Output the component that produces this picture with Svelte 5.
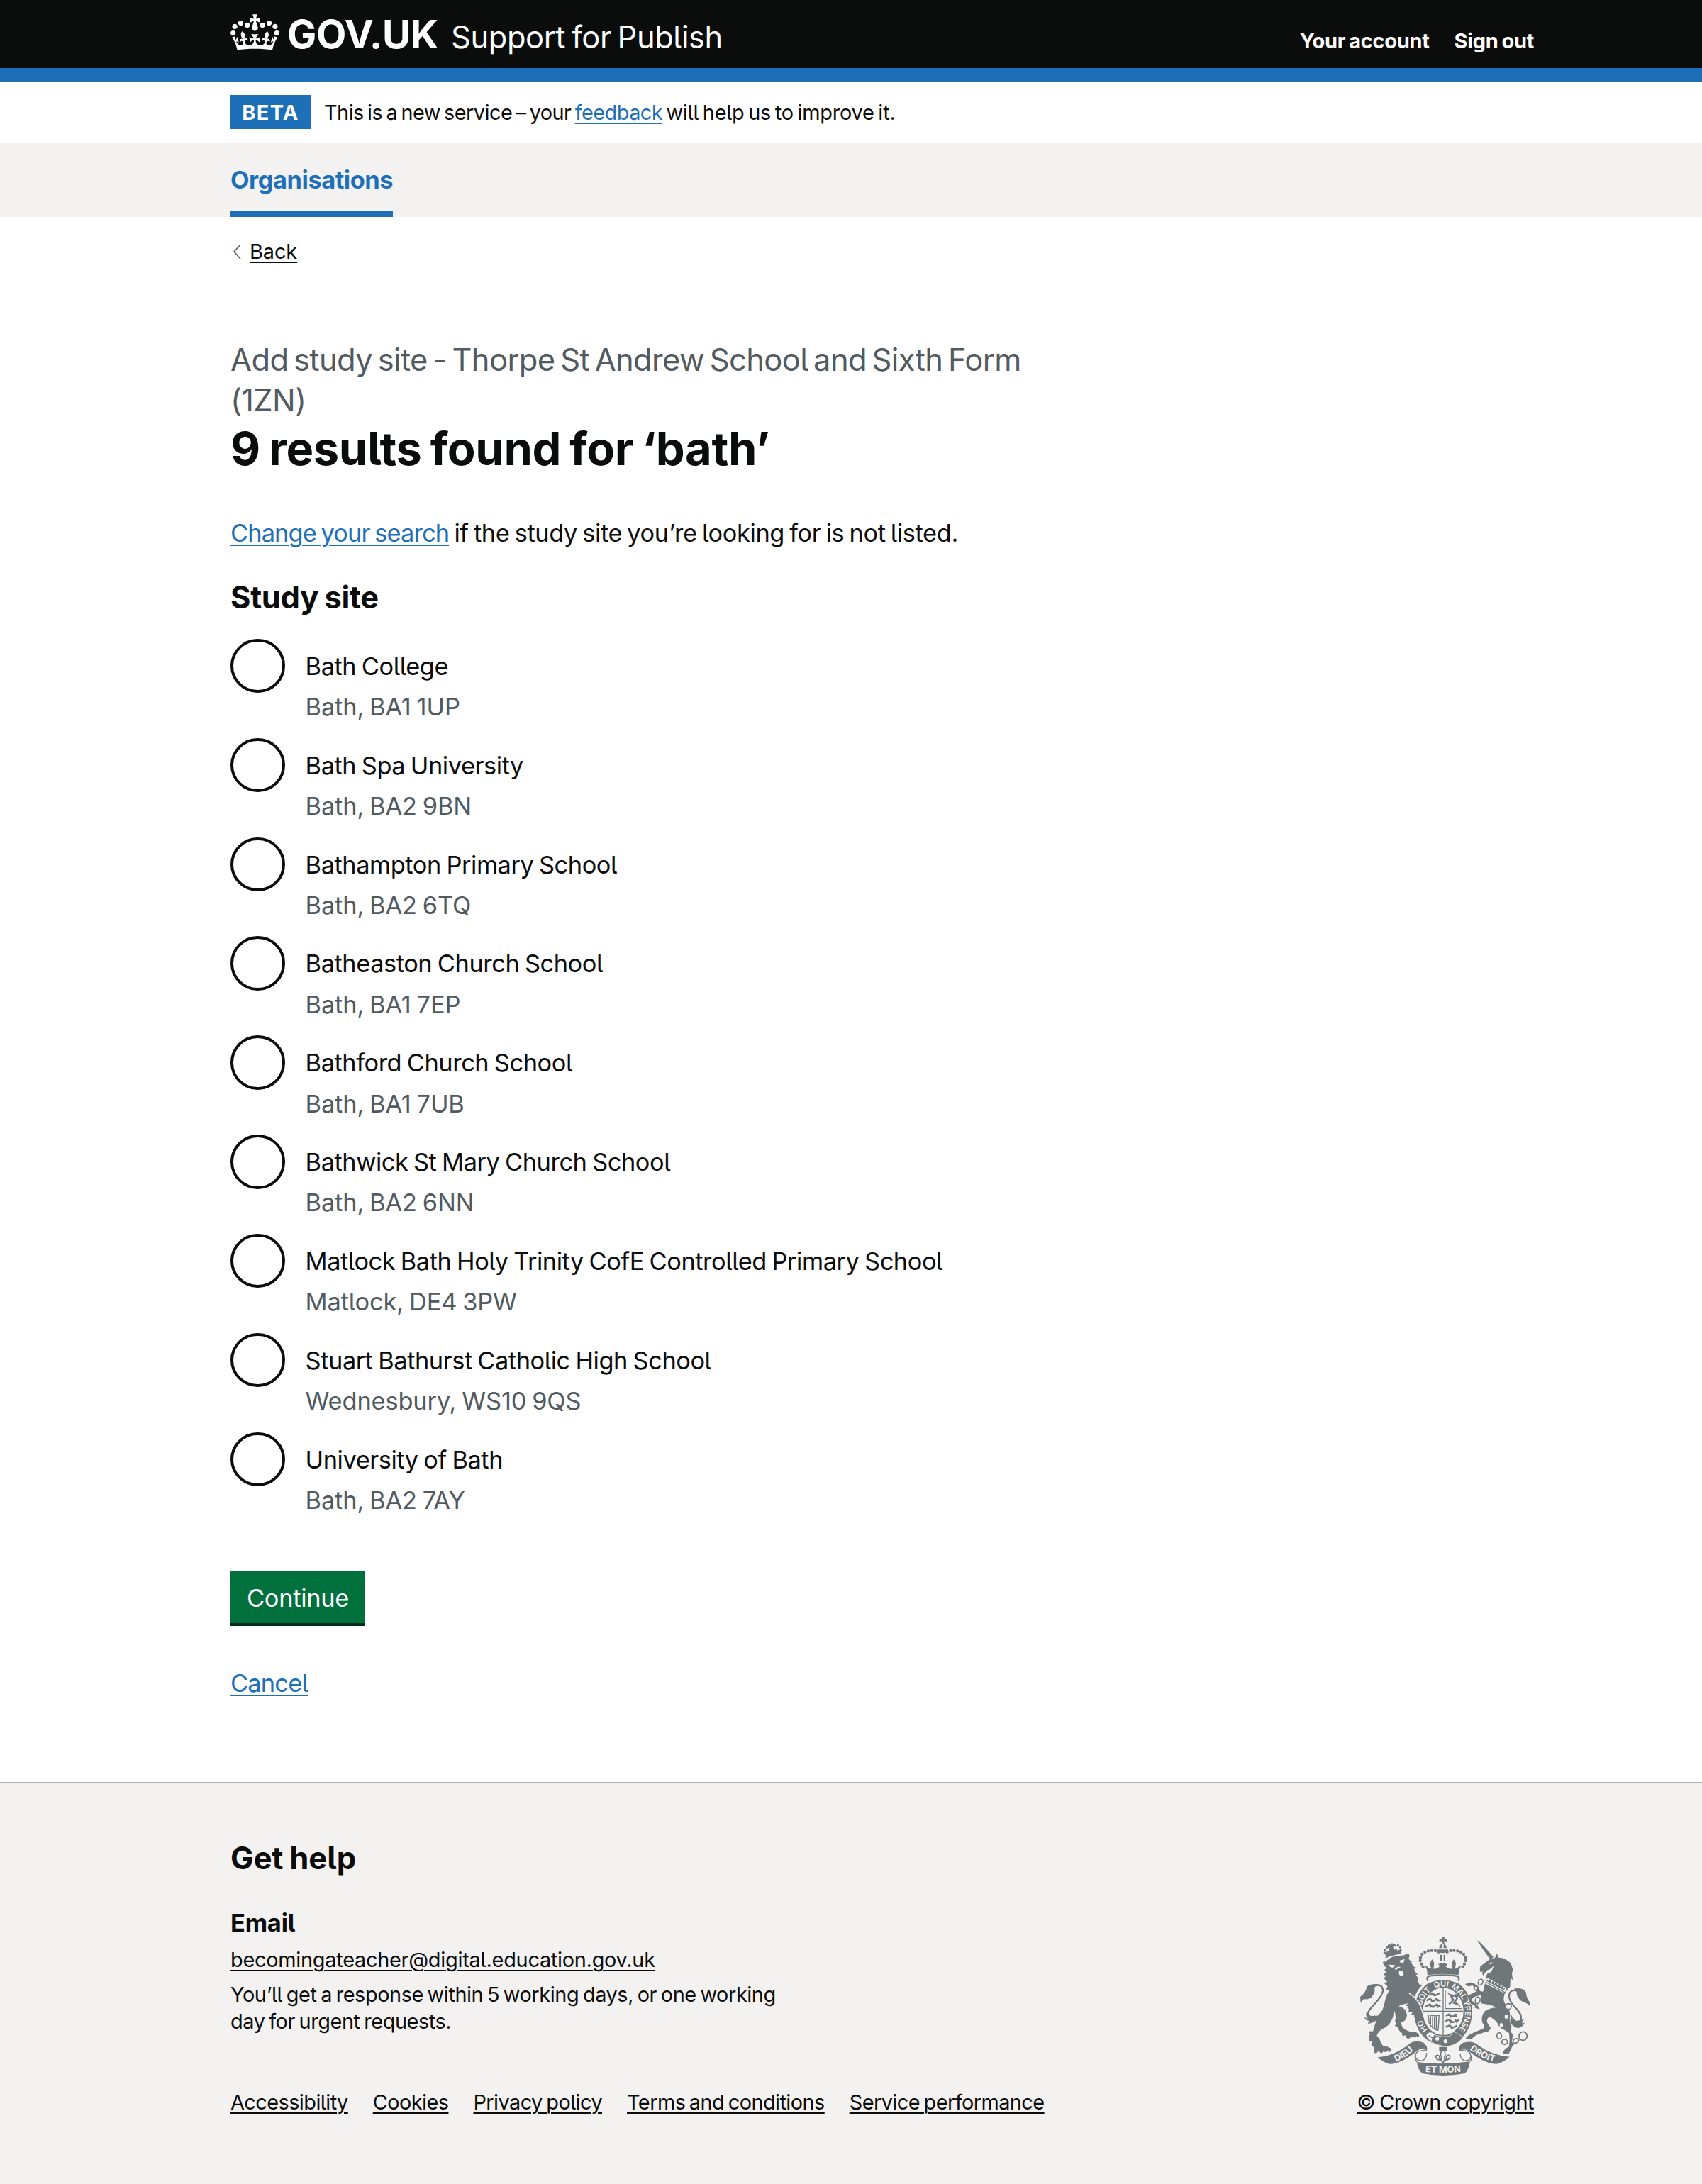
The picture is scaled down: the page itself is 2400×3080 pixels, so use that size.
<script>
  const sites = [
    ['Bath College', 'Bath, BA1 1UP'],
    ['Bath Spa University', 'Bath, BA2 9BN'],
    ['Bathampton Primary School', 'Bath, BA2 6TQ'],
    ['Batheaston Church School', 'Bath, BA1 7EP'],
    ['Bathford Church School', 'Bath, BA1 7UB'],
    ['Bathwick St Mary Church School', 'Bath, BA2 6NN'],
    ['Matlock Bath Holy Trinity CofE Controlled Primary School', 'Matlock, DE4 3PW'],
    ['Stuart Bathurst Catholic High School', 'Wednesbury, WS10 9QS'],
    ['University of Bath', 'Bath, BA2 7AY']
  ];

  const footerLinks = [
    'Accessibility',
    'Cookies',
    'Privacy policy',
    'Terms and conditions',
    'Service performance'
  ];

  // Pearls on the arches of the royal crown, left half; the right half mirrors them.
  const pearls = [
    [386, 128], [372, 123], [357, 122], [342, 124], [328, 129],
    [316, 138], [309, 151], [308, 165], [313, 179], [320, 191]
  ];

  // Links of the unicorn's chain: x, y, rx, ry, rotation.
  const chain = [
    [563, 256, 9, 13, 25],
    [544, 281, 8, 9, 20],
    [551, 333, 10, 14, 15],
    [681, 359, 12, 12, 0],
    [642, 483, 10, 13, -10],
    [665, 509, 12, 11, 0],
    [713, 504, 13, 9, -25],
    [743, 484, 17, 18, 0]
  ];

  // Words on the garter and how far round it each is centred, in percent.
  const garter = [['HO', 9], ['SOIT', 31.5], ['QUI', 47], ['MAL', 61], ['Y', 71], ['PENSE', 82.5]];
</script>

<header class="header">
  <div class="container masthead">
    <svg class="crown" viewBox="0 0 132 97" aria-hidden="true">
      <path
        fill="currentColor"
        fill-rule="evenodd"
        d="M25 30.2c3.5 1.5 7.7-.2 9.1-3.7 1.5-3.6-.2-7.8-3.9-9.2-3.6-1.4-7.6.3-9.1 3.9-1.4 3.5.3 7.5 3.9 9zM9 39.5c3.6 1.5 7.8-.2 9.2-3.7 1.5-3.6-.2-7.8-3.9-9.1-3.6-1.5-7.6.2-9.1 3.8-1.4 3.5.3 7.5 3.8 9zM4.4 57.2c3.5 1.5 7.7-.2 9.1-3.8 1.5-3.6-.2-7.7-3.9-9.1-3.5-1.5-7.6.3-9.1 3.8-1.4 3.5.3 7.6 3.9 9.1zm38.3-21.4c3.5 1.5 7.7-.2 9.1-3.8 1.5-3.6-.2-7.7-3.9-9.1-3.6-1.5-7.6.3-9.1 3.8-1.3 3.6.4 7.7 3.9 9.1zm64.4-5.6c-3.6 1.5-7.8-.2-9.1-3.7-1.5-3.6.2-7.8 3.8-9.2 3.6-1.4 7.7.3 9.2 3.9 1.3 3.5-.4 7.5-3.9 9zm15.9 9.3c-3.6 1.5-7.7-.2-9.1-3.7-1.5-3.6.2-7.8 3.7-9.1 3.6-1.5 7.7.2 9.2 3.8 1.5 3.5-.3 7.5-3.8 9zm4.7 17.7c-3.6 1.5-7.8-.2-9.2-3.8-1.5-3.6.2-7.7 3.9-9.1 3.6-1.5 7.7.3 9.2 3.8 1.3 3.5-.4 7.6-3.9 9.1zM89.3 35.8c-3.6 1.5-7.8-.2-9.2-3.8-1.4-3.6.2-7.7 3.9-9.1 3.6-1.5 7.7.3 9.2 3.8 1.4 3.6-.3 7.7-3.9 9.1zM69.7 17.7l8.9 4.7V9.3l-8.9 2.8c-.2-.3-.5-.6-.9-.9L72.4 0H59.6l3.5 11.2c-.3.3-.6.5-.9.9l-8.8-2.8v13.1l8.8-4.7c.3.3.6.7.9.9l-5 15.4v.1c-.2.8-.4 1.6-.4 2.4 0 4.1 3.1 7.5 7 8.1h.2c.3 0 .7.1 1 .1.4 0 .7 0 1-.1h.2c4-.6 7.1-4.1 7.1-8.1 0-.8-.1-1.7-.4-2.4V34l-5.1-15.4c.4-.2.7-.6 1-.9zM66 92.8c16.9 0 32.8 1.1 47.1 3.2 4-16.9 8.9-26.7 14-33.5l-9.6-3.4c1 4.9 1.1 7.2 0 10.2-1.5-1.4-3-4.3-4.2-8.7L108.6 76c2.8-2 5-3.2 7.5-3.3-4.4 9.4-10 11.9-13.6 11.2-4.3-.8-6.3-4.6-5.6-7.9 1-4.7 5.7-5.9 8-.5 4.3-8.7-3-11.4-7.6-8.8 7.1-7.2 7.9-13.5 2.1-21.1-8 6.1-8.1 12.3-4.5 20.8-4.7-5.4-12.1-2.5-9.5 6.2 3.4-5.2 7.9-2 7.2 3.1-.6 4.3-6.4 7.8-13.5 7.2-10.3-.9-10.9-8-11.2-13.8 2.5-.5 7.1 1.8 11 7.3L80.2 60c-4.1 4.4-8 5.3-12.3 5.4 1.4-4.4 8-11.6 8-11.6H55.5s6.4 7.2 7.9 11.6c-4.2-.1-8-1-12.3-5.4l1.4 16.4c3.9-5.5 8.5-7.7 10.9-7.3-.3 5.8-.9 12.8-11.1 13.8-7.2.6-12.9-2.9-13.5-7.2-.7-5 3.8-8.3 7.1-3.1 2.7-8.7-4.6-11.6-9.4-6.2 3.7-8.5 3.6-14.7-4.6-20.8-5.8 7.6-5 13.9 2.2 21.1-4.7-2.6-11.9.1-7.7 8.8 2.3-5.5 7.1-4.2 8.1.5.7 3.3-1.3 7.1-5.7 7.9-3.5.7-9-1.8-13.5-11.2 2.5.1 4.7 1.3 7.5 3.3l-4.7-15.4c-1.2 4.4-2.7 7.2-4.3 8.7-1.1-3-.9-5.3 0-10.2l-9.5 3.4c5 6.9 9.9 16.7 14 33.5 14.8-2.1 30.8-3.2 47.7-3.2z"
      />
    </svg>
    <span class="logotype">GOV.UK</span>
    <span class="service">Support for Publish</span>
    <nav class="account">
      <a href="#account">Your account</a>
      <a href="#signout">Sign out</a>
    </nav>
  </div>
</header>

<div class="container phase">
  <strong class="tag">BETA</strong>
  <span class="phase-text">This is a new service – your <a href="#feedback">feedback</a> <span class="phase-end">will help us to improve it.</span></span>
</div>

<nav class="primary">
  <div class="container"><a class="tab" href="#organisations">Organisations</a></div>
</nav>

<div class="container">
  <div class="back">
    <svg viewBox="0 0 12 22" aria-hidden="true"><path d="M11 1 2 11l9 10" /></svg>
    <a href="#back">Back</a>
  </div>

  <main>
    <span class="caption">Add study site - Thorpe St Andrew School and Sixth Form (1ZN)</span>
    <h1>9 results found for ‘bath’</h1>
    <p class="body"><a href="#search">Change your search</a> if the study site you’re looking for is not listed.</p>
    <h2 class="legend">Study site</h2>
    <div class="radios">
      {#each sites as [name, address]}
        <label class="radio">
          <span class="ring"></span>
          <span class="text">
            <span class="name">{name}</span>
            <span class="hint">{address}</span>
          </span>
        </label>
      {/each}
    </div>
    <button class="button" type="button">Continue</button>
    <p class="cancel"><a href="#cancel">Cancel</a></p>
  </main>
</div>

<footer class="footer">
  <div class="container footer-row">
    <div class="help">
      <h2>Get help</h2>
      <h3>Email</h3>
      <a class="email" href="#email">becomingateacher@digital.education.gov.uk</a>
      <p>You’ll get a response within 5 working days, or one working day for urgent requests.</p>
      <ul>
        {#each footerLinks as link}
          <li><a href="#footer">{link}</a></li>
        {/each}
      </ul>
    </div>
    <div class="copyright">
      <svg class="arms" viewBox="54 60 720 594" aria-hidden="true">
        <defs>
          <path id="garter" d="M358 474A93 107 0 1 1 436 482" />
          <path id="scroll-left" d="M194 597Q246 580 288 536" />
          <path id="scroll-mid" d="M310 634Q405 645 500 632" />
          <path id="scroll-right" d="M508 532Q556 580 634 596" />
        </defs>

        <!-- Lion -->
        <g class="ink">
          <path d="M160 155 166 132 228 122 228 138Q195 138 160 155Z" />
          <path d="M150 172Q154 167 163 170Q178 150 200 147L240 142Q250 134 260 138Q266 146 258 156L266 166 276 168 268 172 280 190 292 196 282 200 288 214 298 222 290 226 300 240 296 252 308 270 318 268Q292 292 286 318Q308 345 312 372L318 392 306 388 308 402 296 396 288 408 282 396 270 396 276 384Q262 384 256 378L270 374 252 364 262 358 246 356 256 346Q236 348 216 358Q250 366 252 396Q250 420 228 426Q226 440 238 452Q250 462 272 466Q290 464 302 476Q306 486 298 492L292 484Q284 494 270 486Q262 500 250 492L244 480Q228 490 232 472Q216 462 214 446L200 440 208 432Q198 424 204 410Q206 392 196 372L194 400Q184 434 160 448Q130 462 124 482L136 496Q140 516 154 528Q176 526 186 540Q188 548 178 552L172 544Q164 558 152 548Q146 562 136 552L130 546Q124 562 114 554L112 532 100 520 106 508 92 504Q86 490 96 474L88 466Q98 462 108 464Q116 436 122 420Q124 396 142 384Q152 370 158 340Q164 310 178 290L162 286 170 274 156 262 168 254 154 240 164 228 152 226 164 212 156 204 166 196Q152 186 150 172Z" />
          <circle cx="157" cy="132" r="5" /><circle cx="159" cy="119" r="5" /><circle cx="167" cy="109" r="5" />
          <circle cx="202" cy="101" r="5" /><circle cx="214" cy="100" r="5" /><circle cx="223" cy="108" r="5" /><circle cx="225" cy="121" r="5" />
          <path d="m174 94 9 4 2-6 6-1 1 6 8-3 1 9-8 0 3 18 10-8 6 10 8-5-2 10-56 15-7-12 9 2 4-11 10 4-3-16-9 3Z" />
        </g>
        <path class="line" d="M110 272Q148 260 150 290Q150 310 112 352Q80 384 86 400Q92 412 118 400" />
        <path class="ink" d="M130 264Q92 262 82 276Q78 300 54 318L56 344 68 328Q98 330 106 314Q120 296 114 280ZM82 380Q74 400 88 410L70 404Q78 418 92 420L86 432Q104 430 120 420L140 396Q110 400 98 398Z" />
        <path class="paper" d="m176 182 26 2-10 10Q180 196 176 182ZM218 166l24-8-4 14q-10 8-14 0ZM218 210q10-8 18 2l2 12q-12 14-20-2ZM200 200q14-14 26-8l-12 5-8 8Z" />

        <!-- Garter and shield -->
        <ellipse class="rim" cx="405" cy="382" rx="123" ry="142" />
        <ellipse class="paper" cx="405" cy="380" rx="86" ry="100" />
        <g class="thin">
          <path d="M405 280V480M320 379H490M414 290V368H484M424 300 476 360" />
          <path d="M342 394 346 430Q360 456 384 460M342 394Q372 402 388 396L384 460M352 400v34M360 402v44M368 402v50M376 400v56" />
        </g>
        <g class="beast">
          <path d="M346 312 360 304 372 312 392 302M334 334 350 326 362 338 376 328 394 336M330 360 348 350 362 362 378 350 394 362M358 300l10 14M350 324l8 14M374 322l8 16M346 348l8 16M376 348l8 16" />
          <path d="M416 398 430 392 444 402 466 392M414 422 430 414 446 426 474 416M416 446 430 440 444 450 464 440M430 390l8 16M454 390l8 14M430 414l8 16M456 414l8 14M434 438l8 14" />
          <path d="M430 350 446 334 440 318 456 310 464 326 450 344 466 350M436 308l12 10M462 306l6 12" />
        </g>
        {#each garter as [word, offset]}
          <text class="motto ring-text"><textPath href="#garter" startOffset="{offset}%" text-anchor="middle">{word}</textPath></text>
        {/each}
        <path class="strap" d="M352 474Q400 494 436 484L450 466 488 488Q468 522 415 526Q370 522 340 498Z" />
        <path class="buckle" d="M370 474Q344 458 332 478Q334 500 354 506M344 482l24 16" />
        <circle class="paper" cx="380" cy="496" r="8" />
        <circle class="paper" cx="415" cy="506" r="8" />

        <!-- Foreleg over the garter -->
        <path class="ink" d="M258 300Q300 326 312 372L320 396 306 390 308 404 296 398 286 410 282 396 268 396 276 384 260 380Z" />
        <path class="gap" d="M260 302Q302 328 314 372L322 398" />

        <!-- Unicorn -->
        <path class="ink" d="M548 78Q560 82 618 150L604 160Q572 118 548 78Z" />
        <path class="ink" d="M560 204 562 190Q580 176 598 162Q614 152 624 154L632 134 640 152Q678 152 694 184L700 204Q692 222 702 250L690 238 688 276 672 292 588 254 584 236 592 220Q610 216 614 200L622 184Q602 206 590 206L574 228 568 216 576 212 562 212Z" />
        <path class="outlined" d="M582 262 666 304Q656 330 666 346Q690 374 688 398Q682 420 694 440L692 468 700 476 696 510 706 518Q694 530 690 544L682 560 658 558Q656 544 684 528L686 500 684 472 664 458Q640 448 634 428Q620 410 600 402Q584 416 594 432L606 450Q600 468 580 468L544 480 526 496 498 498Q508 480 530 472L574 452Q584 446 572 430Q562 404 580 380Q600 366 628 364Q612 350 590 350L566 346Q560 328 566 310L538 318 524 330 534 342Q550 346 560 372L538 364 540 356 520 346 506 314 548 294Q538 286 530 270L512 274 498 266Q508 254 530 258Q548 266 562 294L574 296Z" />
        <path class="band" d="m588 234 88 46-8 20-82-44Z" />
        <path class="ink" d="m592 244 6 10 6-12 6 16 8-12 4 18 10-12 2 18 10-8 4 16 10-8 2 14 8-4-6 10-72-38Z" />
        <path class="line" d="M720 292Q682 284 684 320Q688 344 720 374Q746 404 726 430" />
        <path class="ink" d="M704 284Q744 276 756 300 756 322 772 342L770 356Q758 342 736 336 714 318 716 298ZM692 392Q700 412 716 420L746 414 738 430 750 428Q740 448 722 450 700 448 688 424Z" />
        <path class="paper" d="m598 176 16-4-6 10ZM665 402a7 9 0 1 0 14 0 7 9 0 1 0-14 0ZM644 438a7 9 0 1 0 14 0 7 9 0 1 0-14 0Z" />

        <!-- Royal crown -->
        <path class="paper" d="M328 240Q330 226 350 224H460Q480 226 482 240L470 262Q405 232 340 262Z" />
        <path class="line" d="M340 250Q332 236 346 230Q405 222 462 230Q478 236 468 250" />
        <path class="ink" d="M328 186 340 192Q346 202 356 196L350 190 358 180 366 190 362 198Q376 204 390 190L384 178 404 182 424 178 416 190Q430 204 446 198L442 190 450 180 458 190 452 198Q462 202 472 190L482 186Q470 204 470 226Q404 216 338 226Q340 206 328 186ZM358 160q14 14 6 28h-12q-6-14 6-28ZM450 160q14 14 6 28h-12q-6-14 6-28ZM388 174h32q-10 10-6 20h-20q4-10-6-20ZM393 140h7v28h-7zM407 140h7v28h-7zM382 118h44v8q-22 14-44 0ZM388 112q2-16 13-17v17ZM420 112q-2-16-13-17v17ZM399 92l2-8-12 4V72l12 4-3-13h14l-3 13 12-4v16l-12-4 2 8Z" />
        {#each pearls as [x, y]}
          <circle class="ink" cx={x} cy={y} r="6.5" />
          <circle class="ink" cx={808 - x} cy={y} r="6.5" />
        {/each}

        <!-- Scroll -->
        <path class="ink" d="M128 574Q200 568 258 520Q286 498 322 512Q342 528 336 544Q310 534 296 546Q226 604 176 602Q148 594 128 574Z" />
        <path class="ink" d="M686 572Q610 566 552 522Q526 500 486 514Q466 530 472 546Q500 534 514 548Q582 602 632 602Q662 594 686 572Z" />
        <path class="ink" d="M294 594Q404 608 518 592Q516 622 498 642Q404 660 316 642Q296 622 294 594Z" />
        <path class="curl" d="M336 546Q286 540 288 572Q294 590 318 588Q338 576 334 556M294 594Q286 584 286 570M472 546Q524 540 522 572Q516 590 494 588Q474 576 478 558M518 592Q526 582 524 570" />
        <text class="motto"><textPath href="#scroll-left" startOffset="50%" text-anchor="middle">DIEU</textPath></text>
        <text class="motto"><textPath href="#scroll-mid" startOffset="50%" text-anchor="middle">ET MON</textPath></text>
        <text class="motto"><textPath href="#scroll-right" startOffset="50%" text-anchor="middle">DROIT</textPath></text>
        <path class="ink" d="M388 530h34v18h-34Z" />
        <path class="lily" d="M404 540Q388 556 398 574L396 582Q386 580 390 572 386 562 376 566 370 578 384 584L398 586 404 600 410 586 424 584Q438 578 432 566 422 562 418 572 422 580 412 582L410 574Q420 556 404 540Z" />

        {#each chain as [x, y, rx, ry, angle]}
          <ellipse class="link" cx={x} cy={y} {rx} {ry} transform="rotate({angle} {x} {y})" />
        {/each}
      </svg>
      <a href="#copyright">© Crown copyright</a>
    </div>
  </div>
</footer>

<style>
  :global(body) {
    background: #fff;
    color: #0b0c0c;
    font-family: Inter, "Liberation Sans", sans-serif;
    font-feature-settings: "cv05";
    font-size: 34.4px;
    line-height: 48px;
    letter-spacing: -0.45px;
    word-spacing: -1.6px;
  }

  a {
    color: #1d70b8;
    text-decoration: underline;
    text-decoration-thickness: 2px;
    text-underline-offset: 4px;
  }

  h1, h2, h3, p, ul {
    margin: 0;
    padding: 0;
  }

  .container {
    width: 1838px;
    margin-left: 325px;
  }

  .header {
    background: #0b0c0c;
    color: #fff;
    border-bottom: 19px solid #1d70b8;
  }

  .masthead {
    display: flex;
    align-items: baseline;
    height: 96px;
    line-height: 96px;
  }

  .crown {
    align-self: flex-start;
    width: 69px;
    height: 51px;
    margin-top: 20px;
  }

  .logotype {
    margin-left: 11px;
    font-size: 55px;
    font-weight: 700;
    letter-spacing: -0.4px;
  }

  .service {
    margin-left: 18px;
    font-size: 43.4px;
    letter-spacing: -0.4px;
    word-spacing: -3px;
  }

  .account {
    display: flex;
    gap: 35px;
    margin-left: auto;
    font-size: 28.9px;
    font-weight: 700;
    letter-spacing: -0.25px;
  }

  .account a {
    color: #fff;
    text-decoration: none;
  }

  .phase {
    display: flex;
    align-items: center;
    height: 86px;
    font-size: 28.9px;
    letter-spacing: -0.55px;
    word-spacing: -2.3px;
  }

  .tag {
    box-sizing: border-box;
    width: 113px;
    height: 48px;
    padding-top: 1px;
    background: #1d70b8;
    color: #fff;
    text-align: center;
    letter-spacing: 1.4px;
  }

  .phase-text {
    margin-left: 19px;
    padding-top: 1px;
  }

  .phase-end {
    letter-spacing: -0.2px;
  }

  .primary {
    background: #f3f2f1;
  }

  .tab {
    display: inline-block;
    box-sizing: border-box;
    height: 105px;
    padding-top: 29px;
    border-bottom: 9px solid #1d70b8;
    vertical-align: top;
    font-weight: 700;
    letter-spacing: -0.45px;
    text-decoration: none;
  }

  .back {
    display: flex;
    align-items: center;
    height: 38px;
    padding-top: 30px;
    font-size: 28.9px;
    letter-spacing: -0.1px;
  }

  .back svg {
    width: 12px;
    height: 32px;
    margin: 0 12px 0 3px;
    fill: none;
    stroke: #505a5f;
    stroke-width: 1.6;
  }

  .back a {
    color: #0b0c0c;
  }

  main {
    display: flex;
    flex-direction: column;
    align-items: flex-start;
    width: 1200px;
    padding-top: 105px;
  }

  .caption {
    color: #505a5f;
    font-size: 43.5px;
    line-height: 57.4px;
    letter-spacing: -0.63px;
    word-spacing: -4px;
  }

  h1 {
    font-size: 65px;
    line-height: 77px;
    letter-spacing: -0.35px;
    word-spacing: -3px;
  }

  .body {
    margin-top: 57px;
    letter-spacing: -0.4px;
    word-spacing: -2px;
  }

  .body a {
    letter-spacing: -0.9px;
  }

  .legend {
    margin-top: 38px;
    font-size: 43.5px;
    line-height: 57px;
    letter-spacing: -0.3px;
  }

  .radios {
    display: flex;
    flex-direction: column;
    gap: 25px;
    margin-top: 30px;
  }

  .radio {
    display: flex;
    height: 114.85px;
  }

  .ring {
    box-sizing: border-box;
    width: 76.6px;
    height: 76.6px;
    border: 4px solid #0b0c0c;
    border-radius: 50%;
  }

  .text {
    display: flex;
    flex-direction: column;
    margin-left: 29px;
    padding-top: 10px;
    line-height: 57.4px;
  }

  .hint {
    color: #505a5f;
    letter-spacing: -0.15px;
  }

  .button {
    box-sizing: border-box;
    width: 190px;
    height: 73px;
    margin-top: 82px;
    padding: 2px 0 0;
    border: 0;
    background: #00703c;
    box-shadow: 0 4px 0 #002d18;
    color: #fff;
    font: inherit;
    letter-spacing: -0.3px;
  }

  .cancel {
    margin-top: 61px;
    letter-spacing: -0.8px;
  }

  .footer {
    margin-top: 115px;
    height: 565px;
    border-top: 2px solid #b1b4b6;
    background: #f3f2f1;
    font-size: 28.9px;
    line-height: 38.3px;
    letter-spacing: -0.5px;
  }

  .footer a {
    color: #0b0c0c;
  }

  .footer-row {
    display: flex;
    justify-content: space-between;
    align-items: flex-end;
    height: 469px;
  }

  .help {
    display: flex;
    flex-direction: column;
    align-items: flex-start;
  }

  .help h2 {
    font-size: 43.5px;
    line-height: 57px;
    letter-spacing: 0;
  }

  .help h3 {
    margin-top: 39px;
    font-size: 34.4px;
    line-height: 48px;
    letter-spacing: -0.2px;
  }

  .email {
    margin-top: 9px;
    letter-spacing: -0.27px;
  }

  .help p {
    width: 800px;
    margin-top: 10px;
    letter-spacing: -0.43px;
    word-spacing: -2px;
  }

  .help ul {
    display: flex;
    gap: 35px;
    margin-top: 76px;
    list-style: none;
    letter-spacing: -0.57px;
    word-spacing: -2px;
  }

  .copyright {
    display: flex;
    flex-direction: column;
    align-items: flex-end;
  }

  .arms {
    width: 240px;
    height: 198px;
    margin: 0 5px 18px 0;
  }

  .ink {
    fill: #6f777b;
  }

  .paper {
    fill: #f3f2f1;
  }

  .line,
  .thin,
  .beast {
    fill: none;
    stroke: #6f777b;
    stroke-width: 7;
  }

  .thin {
    stroke-width: 4;
  }

  .buckle,
  .curl,
  .band {
    fill: #f3f2f1;
    stroke: #6f777b;
    stroke-width: 4;
  }

  .gap {
    fill: none;
    stroke: #f3f2f1;
    stroke-width: 4;
  }

  .rim,
  .strap,
  .outlined {
    fill: #6f777b;
    stroke: #f3f2f1;
    stroke-width: 4;
    paint-order: stroke;
  }

  .lily,
  .link {
    fill: #f3f2f1;
    stroke: #6f777b;
    stroke-width: 5;
  }

  .motto {
    fill: #f3f2f1;
    font-size: 38px;
    font-weight: 700;
    letter-spacing: 0;
    word-spacing: 0;
  }

  .ring-text {
    font-size: 33px;
    font-weight: 600;
    letter-spacing: -0.5px;
  }
</style>
